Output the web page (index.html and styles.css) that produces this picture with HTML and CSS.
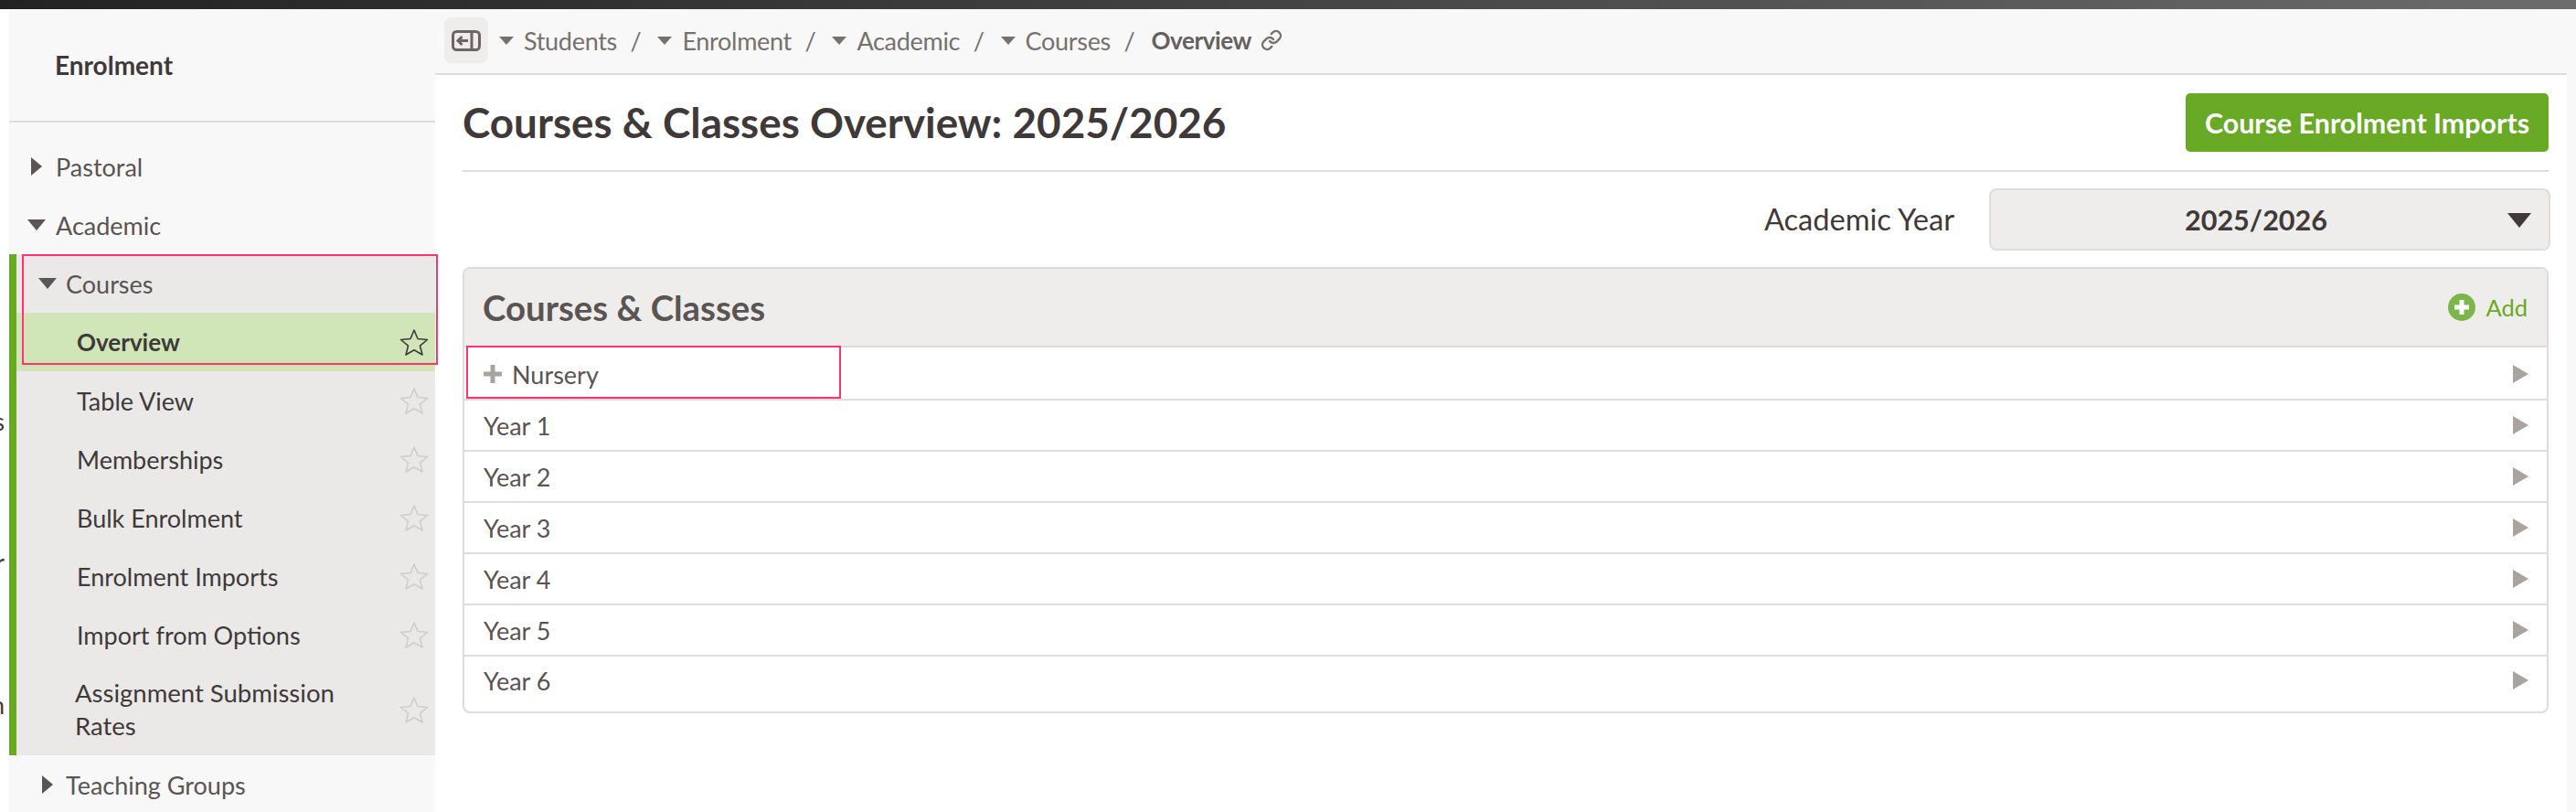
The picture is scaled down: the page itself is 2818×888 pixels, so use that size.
FILE: index.html
```html
<!DOCTYPE html>
<html lang="en">
<head>
<meta charset="utf-8">
<title>Courses &amp; Classes Overview</title>
<link rel="stylesheet" href="styles.css">
</head>
<body>
<div class="topbar"></div>
<div class="app">
  <div class="edge">
    <span class="edge-a">s</span>
    <span class="edge-b">r</span>
    <span class="edge-c">n</span>
  </div>
  <aside class="sidebar">
    <div class="side-head">Enrolment</div>
    <nav class="side-nav">
      <div class="nav-top"><svg class="tri tri-r" viewBox="0 0 12 20"><path d="M0 0 12 10 0 20Z"/></svg><span>Pastoral</span></div>
      <div class="nav-top"><svg class="tri tri-d" viewBox="0 0 20 12"><path d="M0 0H20L10 12Z"/></svg><span>Academic</span></div>
      <div class="group">
        <div class="nav-sub"><svg class="tri tri-d" viewBox="0 0 20 12"><path d="M0 0H20L10 12Z"/></svg><span>Courses</span></div>
        <div class="leaf active"><span>Overview</span><svg class="star" viewBox="0 0 32 30"><path d="M16 2 20 11.5 30.5 12.5 22.5 19.2 25 29 16 23.8 7 29 9.5 19.2 1.5 12.5 12 11.5Z"/></svg></div>
        <div class="leaf"><span>Table View</span><svg class="star" viewBox="0 0 32 30"><path d="M16 2 20 11.5 30.5 12.5 22.5 19.2 25 29 16 23.8 7 29 9.5 19.2 1.5 12.5 12 11.5Z"/></svg></div>
        <div class="leaf"><span>Memberships</span><svg class="star" viewBox="0 0 32 30"><path d="M16 2 20 11.5 30.5 12.5 22.5 19.2 25 29 16 23.8 7 29 9.5 19.2 1.5 12.5 12 11.5Z"/></svg></div>
        <div class="leaf"><span>Bulk Enrolment</span><svg class="star" viewBox="0 0 32 30"><path d="M16 2 20 11.5 30.5 12.5 22.5 19.2 25 29 16 23.8 7 29 9.5 19.2 1.5 12.5 12 11.5Z"/></svg></div>
        <div class="leaf"><span>Enrolment Imports</span><svg class="star" viewBox="0 0 32 30"><path d="M16 2 20 11.5 30.5 12.5 22.5 19.2 25 29 16 23.8 7 29 9.5 19.2 1.5 12.5 12 11.5Z"/></svg></div>
        <div class="leaf"><span>Import from Options</span><svg class="star" viewBox="0 0 32 30"><path d="M16 2 20 11.5 30.5 12.5 22.5 19.2 25 29 16 23.8 7 29 9.5 19.2 1.5 12.5 12 11.5Z"/></svg></div>
        <div class="leaf leaf-tall"><span>Assignment Submission<br>Rates</span><svg class="star" viewBox="0 0 32 30"><path d="M16 2 20 11.5 30.5 12.5 22.5 19.2 25 29 16 23.8 7 29 9.5 19.2 1.5 12.5 12 11.5Z"/></svg></div>
        <div class="mark mark-courses"></div>
      </div>
      <div class="nav-sub nav-plain"><svg class="tri tri-r" viewBox="0 0 12 20"><path d="M0 0 12 10 0 20Z"/></svg><span>Teaching Groups</span></div>
    </nav>
  </aside>
  <div class="content">
    <div class="crumbs">
      <button class="toggle" type="button" aria-label="Toggle sidebar">
        <svg viewBox="0 0 32 23"><rect x="1.5" y="1.5" width="29" height="20" rx="4"/><path d="M22 1.5V21.5M18 11.5H7M11.5 7 7 11.5 11.5 16"/></svg>
      </button>
      <span class="crumb"><i class="caret"></i>Students</span><span class="sep">/</span>
      <span class="crumb"><i class="caret"></i>Enrolment</span><span class="sep">/</span>
      <span class="crumb"><i class="caret"></i>Academic</span><span class="sep">/</span>
      <span class="crumb"><i class="caret"></i>Courses</span><span class="sep">/</span>
      <strong class="crumb-now">Overview</strong>
      <svg class="link-icon" viewBox="0 0 24 24"><path d="M10 13a5 5 0 0 0 7.54.54l3-3a5 5 0 0 0-7.07-7.07l-1.72 1.71M14 11a5 5 0 0 0-7.54-.54l-3 3a5 5 0 0 0 7.07 7.07l1.71-1.71"/></svg>
    </div>
    <main class="main">
      <header class="title-row">
        <h1>Courses &amp; Classes Overview: 2025/2026</h1>
        <a class="btn" href="#">Course Enrolment Imports</a>
      </header>
      <div class="year-row">
        <label class="year-label">Academic Year</label>
        <div class="select"><span>2025/2026</span><svg viewBox="0 0 26 16"><path d="M0 0H26L13 16Z"/></svg></div>
      </div>
      <section class="panel">
        <div class="panel-head">
          <h2>Courses &amp; Classes</h2>
          <a class="add" href="#"><svg viewBox="0 0 30 30"><circle cx="15" cy="15" r="15"/><path d="M15 7V23M7 15H23"/></svg>Add</a>
        </div>
        <div class="row row-first"><span class="row-label"><svg class="plus" viewBox="0 0 20 20"><path d="M10 0V20M0 10H20"/></svg>Nursery</span><svg class="row-arrow" viewBox="0 0 17 20"><path d="M0 0 17 10 0 20Z"/></svg></div>
        <div class="row"><span class="row-label">Year 1</span><svg class="row-arrow" viewBox="0 0 17 20"><path d="M0 0 17 10 0 20Z"/></svg></div>
        <div class="row"><span class="row-label">Year 2</span><svg class="row-arrow" viewBox="0 0 17 20"><path d="M0 0 17 10 0 20Z"/></svg></div>
        <div class="row"><span class="row-label">Year 3</span><svg class="row-arrow" viewBox="0 0 17 20"><path d="M0 0 17 10 0 20Z"/></svg></div>
        <div class="row"><span class="row-label">Year 4</span><svg class="row-arrow" viewBox="0 0 17 20"><path d="M0 0 17 10 0 20Z"/></svg></div>
        <div class="row"><span class="row-label">Year 5</span><svg class="row-arrow" viewBox="0 0 17 20"><path d="M0 0 17 10 0 20Z"/></svg></div>
        <div class="row row-last"><span class="row-label">Year 6</span><svg class="row-arrow" viewBox="0 0 17 20"><path d="M0 0 17 10 0 20Z"/></svg></div>
        <div class="mark mark-nursery"></div>
      </section>
    </main>
  </div>
  <div class="right-strip"></div>
</div>
</body>
</html>
```
FILE: styles.css
```css
* { box-sizing: border-box; }
html, body { margin: 0; height: 100%; }
body {
  width: 2818px;
  height: 888px;
  overflow: hidden;
  background: #fff;
  font-family: "Lato", "Noto Sans", sans-serif;
  font-size: 27px;
  color: #5a5452;
}
.topbar {
  height: 10px;
  background: linear-gradient(90deg, #222 0%, #444 50%, #6c6c6c 100%);
}
.app { display: flex; height: 878px; }
.edge { width: 10px; position: relative; overflow: hidden; color: #3f3a39; }
.edge span { position: absolute; right: 5px; font-size: 26px; line-height: 30px; }
.edge-a { top: 436px; right: 7px; }
.edge-b { top: 590px; }
.edge-c { top: 746px; }
.sidebar { width: 466px; background: #f8f8f8; flex: none; }
.side-head {
  height: 124px;
  border-bottom: 2px solid #e0dcdc;
  padding: 45px 0 0 50px;
  font-size: 28px;
  line-height: 32px;
  font-weight: 700;
  color: #3f3a39;
}
.side-nav { padding-top: 16px; position: relative; }
.nav-top, .nav-sub {
  height: 64px;
  display: flex;
  align-items: center;
  color: #5a5452;
}
.nav-top { padding-left: 20px; }
.nav-sub { padding-left: 32px; }
.tri { fill: #5a5452; flex: none; }
.tri-r { width: 12px; height: 20px; }
.tri-d { width: 20px; height: 12px; margin-right: 11px; }
.nav-sub .tri-d { margin-right: 10px; }
.nav-plain { padding-left: 36px; }
.nav-plain .tri-r { margin-right: 14px; }
.nav-top .tri-r { margin: 0 15px 0 4px; }
.group {
  background: #ebe9e8;
  border-left: 8px solid #68a925;
  position: relative;
}
.group .nav-sub { padding-left: 24px; }
.leaf {
  height: 64px;
  display: flex;
  align-items: center;
  justify-content: space-between;
  padding: 0 7px 0 66px;
  color: #3f3a39;
}
.leaf-tall { height: 100px; padding-left: 64px; line-height: 36px; font-size: 27.5px; }
.active { background: #d0e6b8; font-weight: 700; font-size: 26px; }
.star { width: 32px; height: 30px; fill: none; stroke: #cfcdcc; stroke-width: 1.6; stroke-linejoin: round; flex: none; }
.active .star { stroke: #3f3a39; }
.mark { position: absolute; border: 2px solid #ff3370; pointer-events: none; }
.mark-courses { left: 6px; top: 0; width: 455px; height: 121px; }
.content { flex: 1; min-width: 0; }
.crumbs {
  height: 72px;
  background: #f8f8f8;
  border-bottom: 2px solid #e0dcdc;
  display: flex;
  align-items: center;
  padding: 0 0 2px 10px;
  font-size: 27px;
  letter-spacing: -0.3px;
  color: #77716e;
}
.toggle {
  width: 48px;
  height: 50px;
  border: 0;
  padding: 0;
  border-radius: 8px;
  background: #eeedeb;
  display: flex;
  align-items: center;
  justify-content: center;
  margin-right: 12px;
}
.toggle svg { width: 32px; height: 23px; fill: none; stroke: #6b6663; stroke-width: 3; }
.crumb { display: inline-flex; align-items: center; }
.caret {
  width: 0;
  height: 0;
  border-left: 8px solid transparent;
  border-right: 8px solid transparent;
  border-top: 9px solid #77716e;
  margin-right: 11px;
}
.sep { margin: 0 18px 0 14.5px; }
.crumb-now { font-weight: 700; font-size: 26px; letter-spacing: -0.4px; color: #66605e; }
.link-icon { width: 24px; height: 24px; margin-left: 10px; fill: none; stroke: #77716e; stroke-width: 2.4; stroke-linecap: round; }
.main { padding: 0 20px 0 30px; }
.title-row {
  height: 106px;
  border-bottom: 2px solid #e0dcdc;
  display: flex;
  align-items: flex-start;
  justify-content: space-between;
  padding-top: 20px;
}
h1 { margin: 0; font-size: 45.8px; line-height: 64px; font-weight: 700; color: #3f3a39; }
.btn {
  width: 397px;
  height: 64px;
  background: #68a925;
  color: #fff;
  border-radius: 5px;
  font-weight: 700;
  font-size: 30.4px;
  display: flex;
  align-items: center;
  justify-content: center;
  text-decoration: none;
}
.year-row {
  height: 104px;
  display: flex;
  align-items: flex-start;
  justify-content: flex-end;
  padding-top: 18px;
  margin-right: -2px;
}
.year-label { font-size: 32.6px; line-height: 68px; color: #3f3a39; margin-right: 38px; }
.select {
  width: 614px;
  height: 68px;
  background: #eeedeb;
  border: 2px solid #e0dcdc;
  border-radius: 8px;
  display: flex;
  align-items: center;
  justify-content: center;
  padding-right: 30px;
  position: relative;
  font-size: 30.6px;
  font-weight: 700;
  color: #3f3a39;
}
.select svg { position: absolute; right: 19px; top: 25px; width: 26px; height: 16px; fill: #3f3a39; }
.panel {
  position: relative;
  border: 2px solid #e0dcdc;
  border-radius: 8px;
  overflow: hidden;
}
.panel-head {
  height: 86px;
  background: #eeedeb;
  border-bottom: 2px solid #e0dcdc;
  display: flex;
  align-items: center;
  justify-content: space-between;
  padding: 0 21px 0 20px;
}
h2 { margin: 0; font-size: 38.4px; font-weight: 700; color: #5a5452; }
.add { display: flex; align-items: center; color: #68a925; text-decoration: none; font-size: 25.5px; }
.add svg { width: 30px; height: 30px; margin-right: 11px; }
.add circle { fill: #7cb54a; }
.add path { stroke: #fff; stroke-width: 5; fill: none; }
.row {
  height: 56px;
  border-bottom: 2px solid #e0dcdc;
  display: flex;
  align-items: center;
  justify-content: space-between;
  padding: 0 20px 0 21px;
  color: #5a5452;
}
.row-first { height: 58px; padding-top: 2px; }
.row-last { height: 60px; border-bottom: 0; padding-bottom: 8px; }
.row-label { display: flex; align-items: center; }
.plus { width: 20px; height: 20px; margin-right: 11px; fill: none; stroke: #aaa4a1; stroke-width: 5; }
.row-arrow { width: 17px; height: 20px; fill: #aaa4a1; }
.mark-nursery { left: 2px; top: 84px; width: 410px; height: 58px; }
.right-strip { width: 10px; flex: none; background: #f8f8f8; }
```
